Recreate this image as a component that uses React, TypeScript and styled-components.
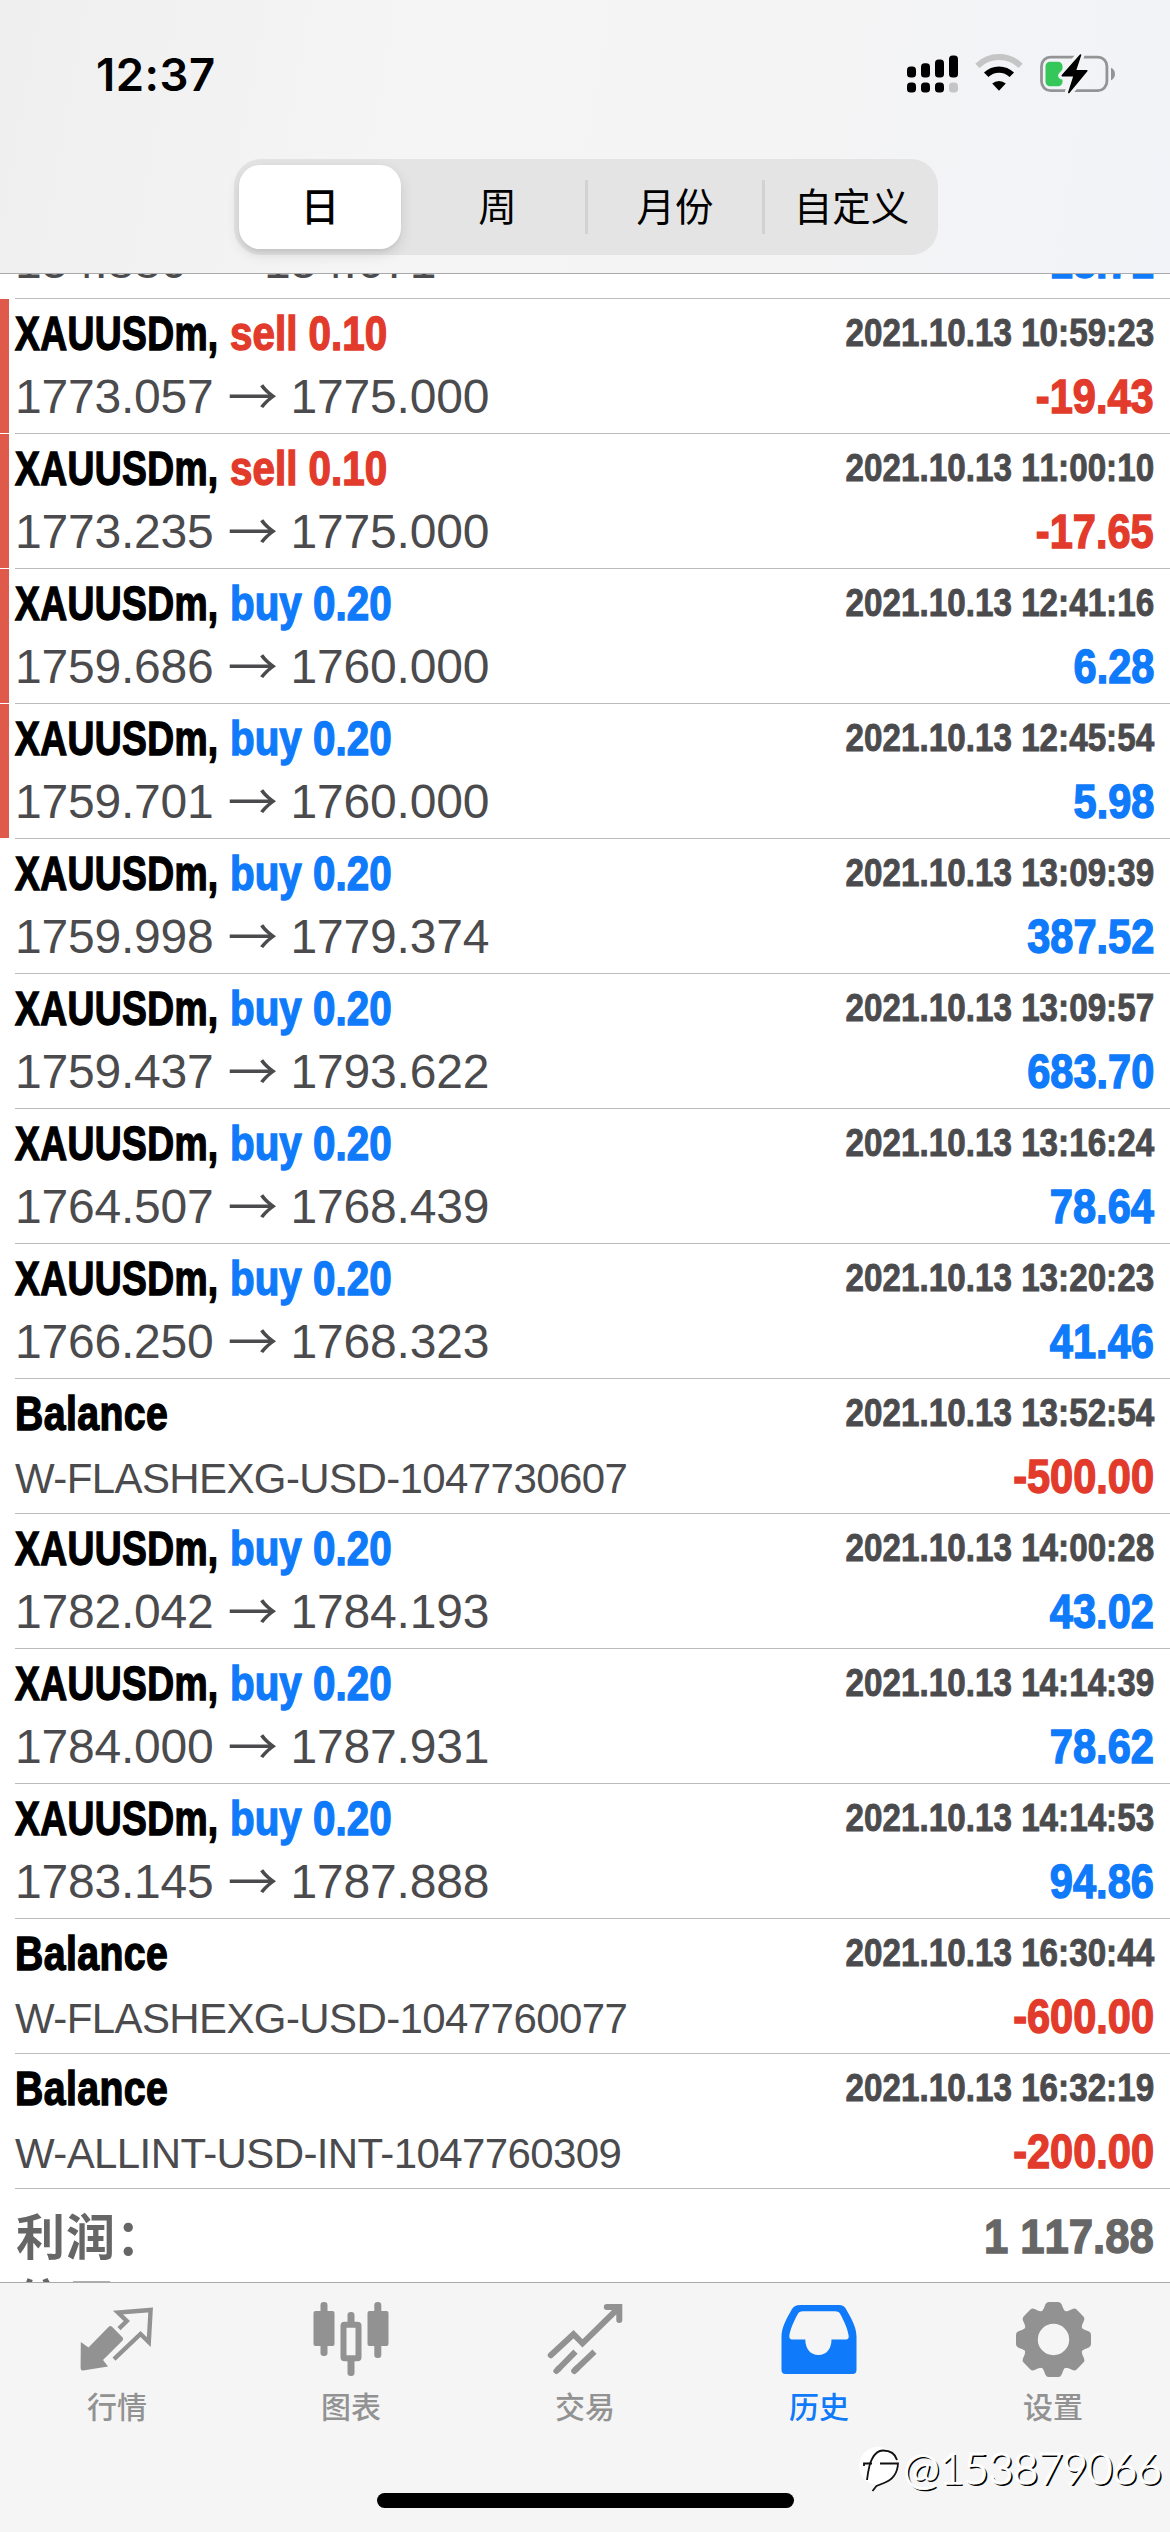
import React from 'react';
import styled, { createGlobalStyle, css } from 'styled-components';

const REGULAR = '"Liberation Sans", "Noto Sans CJK SC", sans-serif';
const CJK = '"Noto Sans CJK SC", sans-serif';

const BLUE = '#0f7afa';
const RED = '#e23b2c';
const GREY = '#929292';

const GlobalStyle = createGlobalStyle`
  html, body { margin: 0; padding: 0; background: #fff; }
  * { box-sizing: border-box; }
`;

/* Condensed bold face: Liberation Sans Bold squeezed horizontally, stems thickened. */
const condensed = css<{ $squeeze: number }>`
  display: block;
  flex: none;
  font: 700 47.5px/60px ${REGULAR};
  font-kerning: none;
  -webkit-text-stroke: 1.4px currentColor;
  transform: scaleX(${p => p.$squeeze});
`;

const Screen = styled.div`
  position: relative;
  width: 1170px;
  height: 2532px;
  display: flex;
  flex-direction: column;
  overflow: hidden;
  background: #fff;
  font-family: ${REGULAR};
`;

const Header = styled.header`
  flex: none;
  height: 274px;
  border-bottom: 1px solid #a9aaac;
  background: linear-gradient(100deg, #efeff0 0%, #f3f2f3 18%, #f5f5f5 35%, #f4f4f5 70%, #f1f3f8 100%);
`;

const StatusBar = styled.div`
  height: 159px;
  padding: 52px 53px 0 96px;
  display: flex;
  justify-content: space-between;
  align-items: flex-start;
`;

const Clock = styled.div`
  font: 600 45.5px/46px Inter, sans-serif;
  letter-spacing: 0.5px;
  color: #000;
`;

const StatusIcons = styled.svg`
  display: block;
  width: 212px;
  height: 44px;
`;

const Segments = styled.div`
  width: 704px;
  height: 96px;
  margin-left: 234px;
  padding-left: 5px;
  display: flex;
  align-items: center;
  border-radius: 27px;
  background: #e4e4e5;
`;

const Segment = styled.div<{ $active?: boolean; $width: number }>`
  flex: none;
  width: ${p => p.$width}px;
  height: 84px;
  margin-right: ${p => (p.$active ? 9 : 0)}px;
  padding-bottom: 6px;
  display: flex;
  align-items: center;
  justify-content: center;
  border-radius: 21px;
  font: ${p => (p.$active ? 500 : 400)} 38.5px/58px ${CJK};
  color: #000;
  background: ${p => (p.$active ? '#fff' : 'transparent')};
  box-shadow: ${p => (p.$active ? '0 5px 14px rgba(0,0,0,0.12), 0 3px 3px rgba(0,0,0,0.04)' : 'none')};
`;

const SegmentRule = styled.div`
  flex: none;
  width: 3px;
  height: 54px;
  background: #d2d2d4;
`;

const Viewport = styled.main`
  height: 2008px;
  overflow: hidden;
`;

const DealList = styled.div`
  margin-top: -110px;
`;

const Deal = styled.div<{ $flagged?: boolean }>`
  height: 135px;
  display: flex;
  &::before {
    content: '';
    width: 9px;
    height: 134px;
    margin-right: 6px;
    background: ${p => (p.$flagged ? '#e05a4b' : 'transparent')};
  }
`;

const DealBody = styled.div`
  flex: 1;
  height: 135px;
  padding: 5px 16px 0 0;
  border-bottom: 1px solid #bcbcbf;
`;

const Line = styled.div`
  height: 63px;
  display: flex;
  justify-content: space-between;
  align-items: flex-start;
  white-space: nowrap;
`;

const Title = styled.div`
  display: flex;
`;

const Name = styled.span<{ $squeeze: number }>`
  ${condensed}
  width: 215px;
  color: #000;
  letter-spacing: 0.5px;
  transform-origin: left center;
`;

const Side = styled.span<{ $squeeze: number; $color: string }>`
  ${condensed}
  color: ${p => p.$color};
  transform-origin: left center;
`;

const Time = styled.div<{ $squeeze: number }>`
  ${condensed}
  margin-top: -1px;
  font-size: 39px;
  -webkit-text-stroke-width: 0.9px;
  color: #4b4b4e;
  transform-origin: right center;
`;

const Prices = styled.div`
  display: flex;
  align-items: baseline;
  font: 400 48px/60px ${REGULAR};
  font-kerning: none;
  letter-spacing: -0.2px;
  color: #4b4b4e;
`;

const Arrow = styled.span`
  width: 77px;
  padding-left: 1px;
  display: flex;
  justify-content: center;
  font: 400 50px/48px ${CJK};
  transform: translateY(2px);
`;

const Comment = styled.div`
  margin-top: 2px;
  font: 400 42px/60px ${REGULAR};
  letter-spacing: -0.6px;
  color: #4b4b4e;
`;

const Amount = styled.div<{ $squeeze: number; $color: string }>`
  ${condensed}
  color: ${p => p.$color};
  transform-origin: right center;
`;

const Summary = styled.div`
  padding: 12px 16px 0 16px;
`;

const SummaryRow = styled.div`
  height: 65px;
  display: flex;
  justify-content: space-between;
  align-items: flex-start;
`;

const SummaryLabel = styled.div`
  font: 700 49px/65px ${CJK};
  letter-spacing: 1px;
  color: #666;
`;

const SummaryAmount = styled.div<{ $squeeze: number }>`
  ${condensed}
  margin-top: 5px;
  font-size: 48.5px;
  color: #666;
  transform-origin: right center;
`;

const TabBar = styled.nav`
  height: 250px;
  padding-top: 17px;
  border-top: 1px solid #a9aaac;
  background: #f5f5f5;
  display: flex;
  flex-direction: column;
`;

const Tabs = styled.div`
  display: flex;
`;

const Tab = styled.div<{ $active?: boolean }>`
  width: 234px;
  display: flex;
  flex-direction: column;
  align-items: center;
  color: ${p => (p.$active ? BLUE : GREY)};
  font: 500 30px/40px ${CJK};
`;

const TabIcon = styled.svg`
  display: block;
  width: 77px;
  height: 77px;
  margin-bottom: 8px;
`;

const HomeIndicator = styled.div`
  width: 417px;
  height: 15px;
  margin: 68px auto 0;
  border-radius: 8px;
  background: #000;
`;

const Watermark = styled.div`
  position: absolute;
  left: 858px;
  top: 2439px;
  display: flex;
  align-items: center;
  font: 300 44px/56px Lato, sans-serif;
  letter-spacing: -0.8px;
  color: #fff;
  -webkit-text-stroke: 1px #fff;
  text-shadow: 2px 2px 0 #000;
`;

const WatermarkLogo = styled.svg`
  width: 42px;
  height: 48px;
  margin: 2px 3px 0 0;
`;

type DealData = {
  side?: 'buy' | 'sell';
  lots?: string;
  from?: string;
  to?: string;
  comment?: string;
  time: string;
  amount: string;
  flagged?: boolean;
};

const deals: DealData[] = [
  { side: 'buy', lots: '0.10', from: '154.880', to: '154.671', time: '2021.10.13 10:52:11', amount: '18.71' },
  { side: 'sell', lots: '0.10', from: '1773.057', to: '1775.000', time: '2021.10.13 10:59:23', amount: '-19.43', flagged: true },
  { side: 'sell', lots: '0.10', from: '1773.235', to: '1775.000', time: '2021.10.13 11:00:10', amount: '-17.65', flagged: true },
  { side: 'buy', lots: '0.20', from: '1759.686', to: '1760.000', time: '2021.10.13 12:41:16', amount: '6.28', flagged: true },
  { side: 'buy', lots: '0.20', from: '1759.701', to: '1760.000', time: '2021.10.13 12:45:54', amount: '5.98', flagged: true },
  { side: 'buy', lots: '0.20', from: '1759.998', to: '1779.374', time: '2021.10.13 13:09:39', amount: '387.52' },
  { side: 'buy', lots: '0.20', from: '1759.437', to: '1793.622', time: '2021.10.13 13:09:57', amount: '683.70' },
  { side: 'buy', lots: '0.20', from: '1764.507', to: '1768.439', time: '2021.10.13 13:16:24', amount: '78.64' },
  { side: 'buy', lots: '0.20', from: '1766.250', to: '1768.323', time: '2021.10.13 13:20:23', amount: '41.46' },
  { comment: 'W-FLASHEXG-USD-1047730607', time: '2021.10.13 13:52:54', amount: '-500.00' },
  { side: 'buy', lots: '0.20', from: '1782.042', to: '1784.193', time: '2021.10.13 14:00:28', amount: '43.02' },
  { side: 'buy', lots: '0.20', from: '1784.000', to: '1787.931', time: '2021.10.13 14:14:39', amount: '78.62' },
  { side: 'buy', lots: '0.20', from: '1783.145', to: '1787.888', time: '2021.10.13 14:14:53', amount: '94.86' },
  { comment: 'W-FLASHEXG-USD-1047760077', time: '2021.10.13 16:30:44', amount: '-600.00' },
  { comment: 'W-ALLINT-USD-INT-1047760309', time: '2021.10.13 16:32:19', amount: '-200.00' },
];

function DealRow({ deal }: { deal: DealData }) {
  return (
    <Deal $flagged={deal.flagged}>
      <DealBody>
        <Line>
          {deal.side ? (
            <Title>
              <Name $squeeze={0.783}>XAUUSDm,</Name>
              <Side $squeeze={0.85} $color={deal.side === 'buy' ? BLUE : RED}>
                {deal.side} {deal.lots}
              </Side>
            </Title>
          ) : (
            <Name $squeeze={0.825}>Balance</Name>
          )}
          <Time $squeeze={0.852}>{deal.time}</Time>
        </Line>
        <Line>
          {deal.comment ? (
            <Comment>{deal.comment}</Comment>
          ) : (
            <Prices>
              <span>{deal.from}</span>
              <Arrow>→</Arrow>
              <span>{deal.to}</span>
            </Prices>
          )}
          <Amount $squeeze={0.875} $color={deal.amount.startsWith('-') ? RED : BLUE}>
            {deal.amount}
          </Amount>
        </Line>
      </DealBody>
    </Deal>
  );
}

const signalTops = [13, 9.7, 6, 2];
const boltPath = 'M175.5 1.2 L157.3 21.8 H169.3 L163.8 38.6 L181.8 17 H170.3 Z';

function StatusGlyphs() {
  return (
    <StatusIcons viewBox="0 0 212 44">
      {signalTops.map((top, i) => (
        <g key={i}>
          <rect x={2 + i * 14} y={top + 1.6} width="9" height={24 - top} rx="3.6" fill="#000" />
          <rect x={2 + i * 14} y="30.6" width="9" height="10" rx="3.6" fill={i === 3 ? '#c5c5c5' : '#000'} />
        </g>
      ))}
      <g transform="translate(0 1.8)">
        <path d="M72.4 12 A31 31 0 0 1 115.6 12" fill="none" stroke="#c5c5c5" strokeWidth="6" />
        <path d="M81.2 21 A18.5 18.5 0 0 1 106.8 21" fill="none" stroke="#000" strokeWidth="6.4" />
        <path d="M87.2 29.8 A10 10 0 0 1 100.8 29.8 L94 37 Z" fill="#000" />
        <rect x="136.5" y="3.4" width="65.4" height="33.4" rx="9" fill="none" stroke="#949496" strokeWidth="2.8" />
        <path d="M206 14 C211.3 16 211.3 24.5 206 26.5 Z" fill="#949496" />
        <rect x="140.5" y="8" width="17" height="24.4" rx="4.5" fill="#35c759" />
        <path d={boltPath} fill="#f3f4f6" stroke="#f3f4f6" strokeWidth="8" strokeLinejoin="round" />
        <path d={boltPath} fill="#000" stroke="#000" strokeWidth="1.6" strokeLinejoin="round" />
      </g>
    </StatusIcons>
  );
}

function QuotesIcon() {
  return (
    <TabIcon viewBox="-1 0 77 77">
      <path d="M0.8 42 L8.5 47.5 L29 26.5 Q30.5 25.5 32 26.8 L42.6 37.6 Q43.6 39 42.6 40.5 L23 60 L28 66.5 L3 70.5 Q0.6 70.6 0.6 68 Z" fill="currentColor" />
      <path d="M39 28.6 L46.8 21 L38 12.5 L70.6 10 L68.8 42 L60.5 34 L34 59.2" fill="none" stroke="currentColor" strokeWidth="4.4" />
    </TabIcon>
  );
}

function ChartIcon() {
  return (
    <TabIcon viewBox="-1 0 77 77" fill="currentColor">
      <rect x="-0.5" y="11" width="21" height="35" rx="2" />
      <rect x="6.5" y="2" width="7" height="54" rx="3.2" />
      <rect x="53.5" y="11" width="21" height="35" rx="2" />
      <rect x="60.3" y="2" width="7" height="56" rx="3.2" />
      <rect x="29.5" y="24.7" width="15" height="33.5" rx="1" fill="none" stroke="currentColor" strokeWidth="6" strokeLinejoin="round" />
      <rect x="33.5" y="12" width="7" height="13" rx="3.2" />
      <rect x="33.5" y="58" width="7" height="18" rx="3.2" />
    </TabIcon>
  );
}

function TradeIcon() {
  return (
    <TabIcon viewBox="-1 0 77 77" fill="none" stroke="currentColor" strokeWidth="6">
      <path d="M2.8 55.3 L25.5 34.2 L34.5 43.3 L70 8.5" strokeLinecap="round" />
      <path d="M58.8 7 H71.3 V20" strokeLinecap="round" />
      <path d="M63 8 L70 8 L70 16 Z" fill="currentColor" stroke="none" />
      <path d="M9.4 70 L27.5 51.6 M27.2 70 L46.5 51.6" />
      <path d="M8.4 71 L11 68.4 M26.2 71 L29 68.3" strokeLinecap="round" />
    </TabIcon>
  );
}

function HistoryIcon() {
  return (
    <TabIcon viewBox="-1 0 77 77">
      <path
        fill="currentColor"
        fillRule="evenodd"
        d="M18 5 H57 Q62 5 64 9 C70 20 74.5 27 74.5 37 V70 Q74.5 74 70.5 74 H3.5 Q-0.5 74 -0.5 70 V37 C-0.5 27 4 20 10 9 Q12.5 5 18 5 Z M21 11.2 Q17 11.2 15.5 14.5 C11.5 22 8 30 7.3 36 Q7.2 39.4 10 39.4 H23.3 C23.3 48 28 55 36.5 55 C45 55 49.5 48 49.5 39.4 H64 Q67 39.4 66.7 36 C66 30 62.5 22 58.5 14.5 Q57 11.2 53 11.2 Z"
      />
    </TabIcon>
  );
}

const teeth = [0, 45, 90, 135, 180, 225, 270, 315];

function SettingsIcon() {
  return (
    <TabIcon viewBox="-38.5 -39.5 77 77">
      <circle r="23" fill="none" stroke="currentColor" strokeWidth="14.6" />
      {teeth.map(angle => (
        <path
          key={angle}
          transform={`rotate(${angle})`}
          d="M-14.5 -26 Q-11 -28 -9.7 -31 L-8.2 -35 Q-7.2 -37.5 -4.8 -37.5 H4.8 Q7.2 -37.5 8.2 -35 L9.7 -31 Q11 -28 14.5 -26 Z"
          fill="currentColor"
        />
      ))}
    </TabIcon>
  );
}

export default function App() {
  return (
    <Screen>
      <GlobalStyle />
      <Header>
        <StatusBar>
          <Clock>12:37</Clock>
          <StatusGlyphs />
        </StatusBar>
        <Segments>
          <Segment $active $width={162}>日</Segment>
          <Segment $width={175}>周</Segment>
          <SegmentRule />
          <Segment $width={174}>月份</Segment>
          <SegmentRule />
          <Segment $width={173}>自定义</Segment>
        </Segments>
      </Header>
      <Viewport>
        <DealList>
          {deals.map(deal => (
            <DealRow key={deal.time} deal={deal} />
          ))}
        </DealList>
        <Summary>
          <SummaryRow>
            <SummaryLabel>利润：</SummaryLabel>
            <SummaryAmount $squeeze={0.9}>1 117.88</SummaryAmount>
          </SummaryRow>
          <SummaryRow>
            <SummaryLabel>信用：</SummaryLabel>
          </SummaryRow>
        </Summary>
      </Viewport>
      <TabBar>
        <Tabs>
          <Tab><QuotesIcon />行情</Tab>
          <Tab><ChartIcon />图表</Tab>
          <Tab><TradeIcon />交易</Tab>
          <Tab $active><HistoryIcon />历史</Tab>
          <Tab><SettingsIcon />设置</Tab>
        </Tabs>
        <HomeIndicator />
      </TabBar>
      <Watermark>
        <WatermarkLogo viewBox="0 0 42 48">
          <circle cx="20" cy="22" r="19" fill="#fff" />
          <g fill="none" stroke="#111" strokeWidth="1.8">
            <path d="M6 22 V19.5 H14" />
            <path d="M9 36 C10 28 11 20 14 15 C17 9 20 6.5 25 6.5 C31 6.5 37 9 39 16" />
            <path d="M22 19.5 H40 C39.5 29 34 36 26 39 L18.5 42 L14.5 47" />
          </g>
        </WatermarkLogo>
        @153879066
      </Watermark>
    </Screen>
  );
}
